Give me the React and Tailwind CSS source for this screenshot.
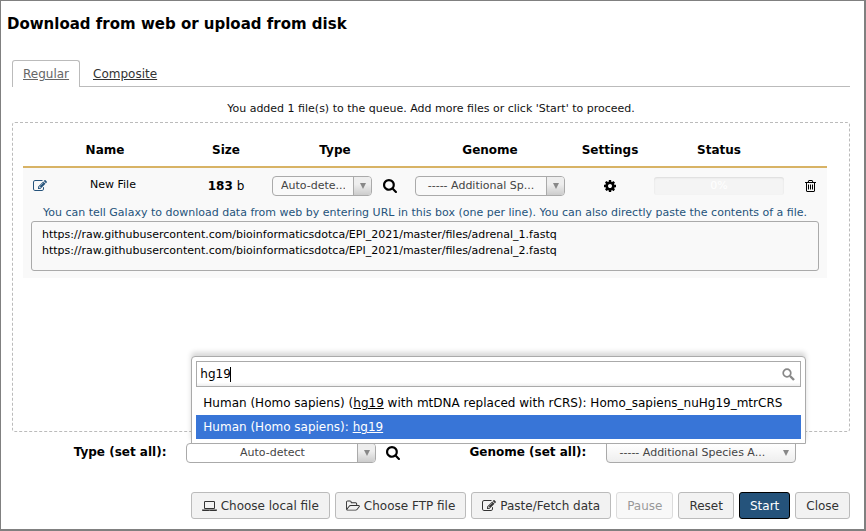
import React from "react";

const ICONS = {
  edit: {
    box: "0 0 1792 1792",
    d: "M888 1184l116-116-152-152-116 116v56h96v96h56zm440-720q-16-16-33 1l-350 350q-17 17-1 33t33-1l350-350q17-17 1-33zm80 594v190q0 119-84.5 203.5t-203.5 84.5h-832q-119 0-203.5-84.5t-84.5-203.5v-832q0-119 84.5-203.5t203.5-84.5h832q63 0 117 25 15 7 18 23 3 17-9 29l-49 49q-14 14-32 8-23-6-45-6h-832q-66 0-113 47t-47 113v832q0 66 47 113t113 47h832q66 0 113-47t47-113v-126q0-13 9-22l64-64q15-15 35-7t20 29zm-96-738l288 288-672 672h-288v-288zm444 132l-92 92-288-288 92-92q28-28 68-28t68 28l152 152q28 28 28 68t-28 68z",
  },
  search: {
    box: "64 128 1664 1664",
    d: "M1216 832q0-185-131.5-316.5t-316.5-131.5-316.5 131.5-131.5 316.5 131.5 316.5 316.5 131.5 316.5-131.5 131.5-316.5zm512 832q0 52-38 90t-90 38q-54 0-90-38l-343-342q-179 124-399 124-143 0-273.5-55.5t-225-150-150-225-55.5-273.5 55.5-273.5 150-225 225-150 273.5-55.5 273.5 55.5 225 150 150 225 55.5 273.5q0 220-124 399l343 343q37 37 37 90z",
  },
  cog: {
    box: "128 128 1536 1536",
    d: "M1152 896q0-106-75-181t-181-75-181 75-75 181 75 181 181 75 181-75 75-181zm512-109v222q0 12-8 23t-20 13l-185 28q-19 54-39 91 35 50 107 138 10 12 10 25t-9 23q-27 37-99 108t-94 71q-12 0-26-9l-138-108q-44 23-91 38-16 136-29 186-7 28-36 28h-222q-14 0-24.5-8.5t-11.5-21.5l-28-184q-49-16-90-37l-141 107q-10 9-25 9-14 0-25-11-126-114-165-168-7-10-7-23 0-12 8-23 15-21 51-66.5t54-70.5q-27-50-41-99l-183-27q-13-2-21-12.5t-8-23.5v-222q0-12 8-23t19-13l186-28q14-46 39-92-40-57-107-138-10-12-10-24 0-10 9-23 26-36 98.5-107.5t94.5-71.5q13 0 26 10l138 107q44-23 91-38 16-136 29-186 7-28 36-28h222q14 0 24.5 8.5t11.5 21.5l28 184q49 16 90 37l142-107q9-9 24-9 13 0 25 10 129 119 165 170 7 8 7 22 0 12-8 23-15 21-51 66.5t-54 70.5q26 50 41 98l183 28q13 2 21 12.5t8 23.5z",
  },
  trash: {
    box: "192 128 1408 1536",
    d: "M704 736v576q0 14-9 23t-23 9h-64q-14 0-23-9t-9-23v-576q0-14 9-23t23-9h64q14 0 23 9t9 23zm256 0v576q0 14-9 23t-23 9h-64q-14 0-23-9t-9-23v-576q0-14 9-23t23-9h64q14 0 23 9t9 23zm256 0v576q0 14-9 23t-23 9h-64q-14 0-23-9t-9-23v-576q0-14 9-23t23-9h64q14 0 23 9t9 23zm128 724v-948h-896v948q0 22 7 40.5t14.5 27 10.5 8.5h832q3 0 10.5-8.5t14.5-27 7-40.5zm-672-1076h448l-48-117q-7-9-17-11h-317q-10 2-17 11zm928 32v64q0 14-9 23t-23 9h-96v948q0 83-47 143.5t-113 60.5h-832q-66 0-113-58.5t-47-141.5v-952h-96q-14 0-23-9t-9-23v-64q0-14 9-23t23-9h309l70-167q15-37 54-63t79-26h320q40 0 79 26t54 63l70 167h309q14 0 23 9t9 23z",
  },
  laptop: {
    box: "0 0 1920 1792",
    d: "M416 1280q-66 0-113-47t-47-113v-704q0-66 47-113t113-47h1088q66 0 113 47t47 113v704q0 66-47 113t-113 47h-1088zm-32-864v704q0 13 9.5 22.5t22.5 9.5h1088q13 0 22.5-9.5t9.5-22.5v-704q0-13-9.5-22.5t-22.5-9.5h-1088q-13 0-22.5 9.5t-9.5 22.5zm1376 928h160v96q0 40-47 68t-113 28h-1600q-66 0-113-28t-47-68v-96h1760zm-720 96q16 0 16-16t-16-16h-160q-16 0-16 16t16 16h160z",
  },
  folder: {
    box: "64 64 1920 1664",
    d: "M1845 931q0-35-53-35h-1088q-40 0-85.5 21.5t-71.5 52.5l-294 363q-18 24-18 40 0 35 53 35h1088q40 0 86-22t71-53l294-363q18-22 18-39zm-1141-163h768v-160q0-40-28-68t-68-28h-576q-40 0-68-28t-28-68v-64q0-40-28-68t-68-28h-320q-40 0-68 28t-28 68v853l256-315q44-53 116-87.5t140-34.5zm1269 163q0 62-46 120l-295 363q-43 53-116 87.5t-140 34.5h-1088q-92 0-158-66t-66-158v-960q0-92 66-158t158-66h320q92 0 158 66t66 158v32h544q92 0 158 66t66 158v160h192q54 0 99 24.5t67 70.5q15 32 15 68z",
  },
};

function Icon({ name, className }) {
  return (
    <svg viewBox={ICONS[name].box} className={className} fill="currentColor" aria-hidden="true">
      <path d={ICONS[name].d} />
    </svg>
  );
}

function Select({ id, label, value, width, open }) {
  return (
    <div
      className={`flex h-5 overflow-hidden rounded border border-[#aaa] text-[#444] ${width} ${
        open ? "rounded-t-none bg-linear-to-b from-white to-[#eee]" : ""
      }`}
    >
      <select
        id={id}
        aria-label={label}
        className="h-full min-w-0 flex-1 appearance-none bg-transparent px-2 text-center text-[11px] leading-[18px] outline-none [text-align-last:center]"
      >
        <option>{value}</option>
      </select>
      <span
        className={`flex w-[18px] items-center justify-center ${
          open ? "" : "border-l border-[#aaa] bg-linear-to-t from-[#ccc] to-[#eee] to-60%"
        }`}
      >
        <svg viewBox="0 0 6 6" className="size-1.5" fill="#888" aria-hidden="true">
          <path d="M0 0h6L3 6z" />
        </svg>
      </span>
    </div>
  );
}

function Button({ icon, iconClass, primary, disabled, children }) {
  return (
    <button
      type="button"
      disabled={disabled}
      className={`flex h-[27px] items-center gap-1 whitespace-nowrap rounded-[3px] border px-2.5 text-xs ${
        primary ? "border-black bg-[#25537b] text-white" : "border-[#bbb] bg-[#f2f2f2] text-[#333]"
      } ${disabled ? "opacity-50" : ""}`}
    >
      {icon && <Icon name={icon} className={iconClass} />}
      {children}
    </button>
  );
}

function Tabs() {
  return (
    <nav className="mt-[25px] flex border-b border-[#bbb] text-xs leading-4 text-[#333] underline">
      <a href="#regular" className="-mb-px rounded-t-[3px] border border-b-0 border-[#bbb] bg-white px-2.5 py-[5px] text-[#666]">
        Regular
      </a>
      <a href="#composite" className="px-[13px] pt-1.5 pb-1">
        Composite
      </a>
    </nav>
  );
}

function GenomeMenu() {
  return (
    <div className="absolute -right-2.5 bottom-[19px] z-10 w-[615px] rounded-t border border-[#aaa] bg-white p-1 text-xs shadow-[0_-4px_5px_rgba(0,0,0,0.15)]">
      <div className="relative flex h-[26px] items-center">
        <input
          aria-label="Search genomes"
          defaultValue="hg19"
          className="h-full w-full border border-[#aaa] bg-linear-to-b from-white from-85% to-[#eee] px-[3px] outline-none"
        />
        <span className="absolute left-[34px] h-[15px] w-px bg-black" />
        <svg viewBox="0 0 13 13" className="absolute right-1.5 size-[13px]" fill="none" stroke="#888" aria-hidden="true">
          <circle cx="5" cy="5" r="3.8" strokeWidth="1.7" />
          <path d="M8 8l4 4" strokeWidth="2.4" />
        </svg>
      </div>
      <ul className="mt-1 leading-4" role="listbox" aria-label="Genomes">
        <li role="option" aria-selected="false" className="px-[7px] py-1">
          Human (Homo sapiens) (<span className="underline">hg19</span> with mtDNA replaced with rCRS): Homo_sapiens_nuHg19_mtrCRS
        </li>
        <li role="option" aria-selected="true" className="bg-[#3875d7] px-[7px] py-1 text-white">
          Human (Homo sapiens): <span className="underline">hg19</span>
        </li>
      </ul>
    </div>
  );
}

function QueueTable() {
  return (
    <table className="w-full table-fixed border-collapse text-center">
      <colgroup>
        <col />
        <col className="w-[78px]" />
        <col className="w-[140px]" />
        <col className="w-[170px]" />
        <col className="w-[70px]" />
        <col className="w-[148px]" />
        <col className="w-[34px]" />
      </colgroup>
      <thead>
        <tr className="h-[34px] border-b-2 border-[#d8b365] text-xs">
          <th>Name</th>
          <th>Size</th>
          <th>Type</th>
          <th>Genome</th>
          <th>Settings</th>
          <th>Status</th>
          <th />
        </tr>
      </thead>
      <tbody className="bg-[#f9f9f9]">
        <tr className="h-9 text-xs">
          <td className="pr-2 pl-2.5">
            <div className="flex items-center">
              <Icon name="edit" className="size-3.5 text-[#25537b]" />
              <span className="flex-1 text-[11px]">New File</span>
            </div>
          </td>
          <td>
            <strong>183</strong> b
          </td>
          <td>
            <div className="flex items-center gap-[11px] pl-[7px]">
              <Select label="Type" value="Auto-dete..." width="w-[100px]" />
              <Icon name="search" className="size-3.5" />
            </div>
          </td>
          <td>
            <div className="flex justify-center">
              <Select label="Genome" value="----- Additional Sp..." width="w-[150px]" />
            </div>
          </td>
          <td>
            <button type="button" aria-label="Settings" className="mx-auto block">
              <Icon name="cog" className="size-3" />
            </button>
          </td>
          <td>
            <div className="mx-auto h-[18px] w-[130px] rounded-[3px] bg-[#f4f4f4] text-[11px] leading-[18px] text-white shadow-[inset_0_1px_2px_rgba(0,0,0,0.1)]">
              0%
            </div>
          </td>
          <td>
            <button type="button" aria-label="Remove file" className="mx-auto block">
              <Icon name="trash" className="h-3 w-[11px]" />
            </button>
          </td>
        </tr>
        <tr>
          <td colSpan={7} className="px-2 pb-[7px]">
            <label htmlFor="urls" className="block pt-0.5 text-[11px] leading-4 text-[#25537b]">
              You can tell Galaxy to download data from web by entering URL in this box (one per line). You can also directly paste the contents of a file.
            </label>
            <textarea
              id="urls"
              className="block h-[50px] w-full resize-none rounded-[3px] border border-[#aaa] bg-transparent px-2.5 pt-[5px] pb-1 text-[11px] leading-4 outline-none"
              defaultValue={
                "https://raw.githubusercontent.com/bioinformaticsdotca/EPI_2021/master/files/adrenal_1.fastq\nhttps://raw.githubusercontent.com/bioinformaticsdotca/EPI_2021/master/files/adrenal_2.fastq"
              }
            />
          </td>
        </tr>
      </tbody>
    </table>
  );
}

export default function App() {
  return (
    <main className="border-t border-r-2 border-b-2 border-l border-[#808080] bg-white pb-2.5 font-['DejaVu_Sans',sans-serif] text-black">
      <h1 className="px-1.5 pt-3 text-[15px] leading-[22px] font-bold">Download from web or upload from disk</h1>
      <div className="pr-3.5 pl-[11px]">
        <Tabs />
        <p className="mt-3.5 text-center text-[11px] leading-4 text-[#111]">
          You added 1 file(s) to the queue. Add more files or click &apos;Start&apos; to proceed.
        </p>
        <section className="mt-[5px] min-h-[310px] rounded-[3px] border border-dashed border-[#bbb] pt-2.5 pr-[22px] pl-2.5">
          <QueueTable />
        </section>
        <div className="mt-[11px] flex items-center justify-center pl-2 text-xs">
          <label htmlFor="type-all" className="mr-5 pb-0.5 font-bold">
            Type (set all):
          </label>
          <Select id="type-all" value="Auto-detect" width="w-[190px]" />
          <Icon name="search" className="ml-2.5 size-3.5" />
          <label htmlFor="genome-all" className="mr-5 ml-[69px] pb-0.5 font-bold">
            Genome (set all):
          </label>
          <div className="relative">
            <Select id="genome-all" value="----- Additional Species A..." width="w-[190px]" open />
            <GenomeMenu />
          </div>
        </div>
        <footer className="mt-[29px] flex justify-end gap-[5px]">
          <Button icon="laptop" iconClass="h-3.5 w-[15px]">
            Choose local file
          </Button>
          <Button icon="folder" iconClass="h-3 w-3.5">
            Choose FTP file
          </Button>
          <Button icon="edit" iconClass="size-3.5">
            Paste/Fetch data
          </Button>
          <Button disabled>Pause</Button>
          <Button>Reset</Button>
          <Button primary>Start</Button>
          <Button>Close</Button>
        </footer>
      </div>
    </main>
  );
}
